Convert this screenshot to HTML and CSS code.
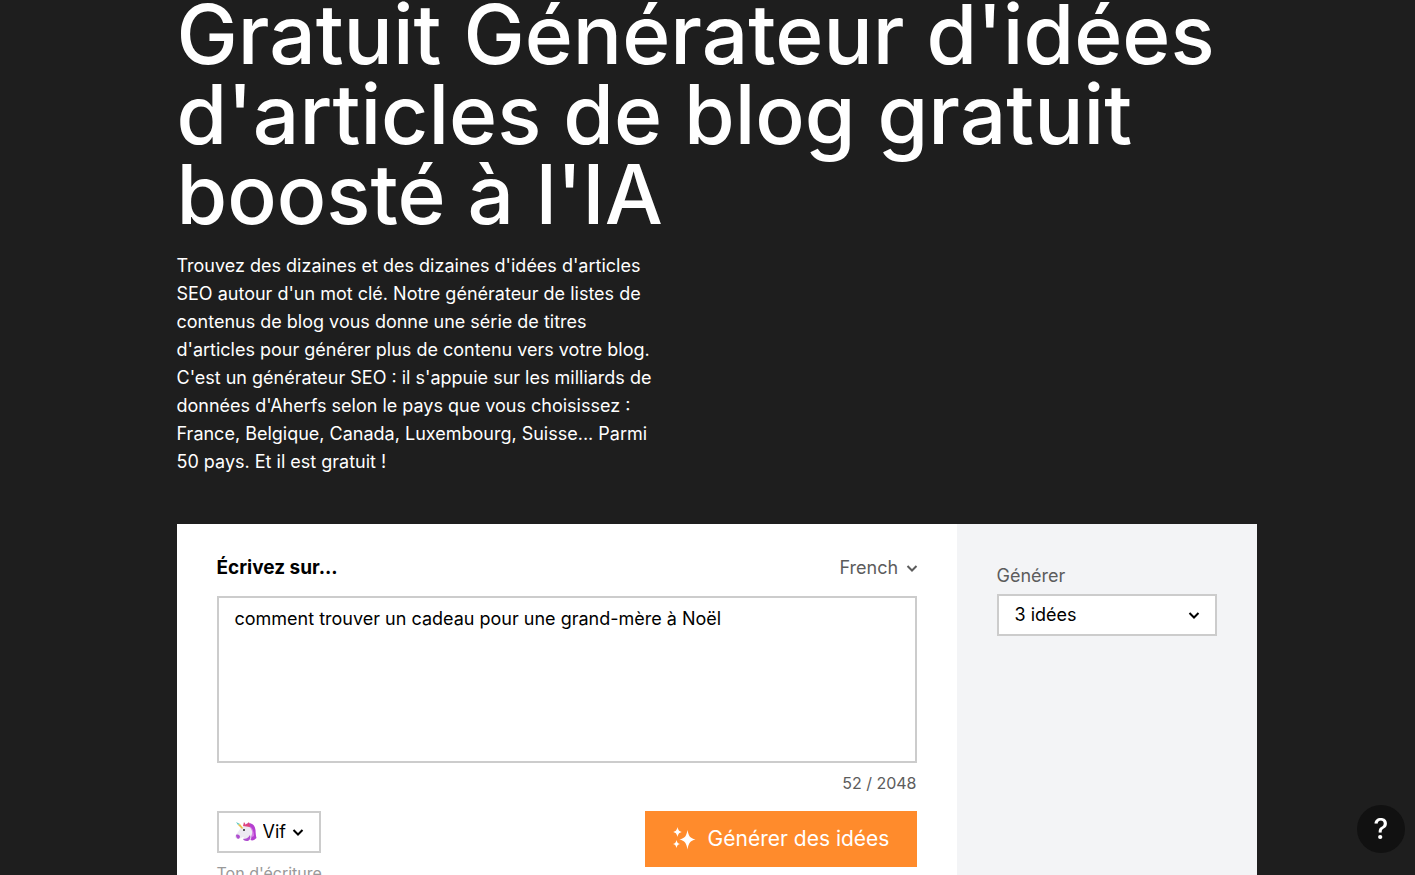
FILE: index.html
```html
<!DOCTYPE html>
<html lang="fr">
<head>
    <meta charset="UTF-8">
    <title>Générateur d'idées d'articles de blog</title>
    <link rel="stylesheet" href="styles.css">
</head>
<body>

<main class="page">
    <h1 class="title">Gratuit Générateur d'idées d'articles de blog gratuit boosté à l'IA</h1>
    <p class="intro">Trouvez des dizaines et des dizaines d'idées d'articles SEO autour d'un mot clé. Notre générateur de listes de contenus de blog vous donne une série de titres d'articles pour générer plus de contenu vers votre blog. C'est un générateur SEO&nbsp;: il s'appuie sur les milliards de données d'Aherfs selon le pays que vous choisissez&nbsp;: France, Belgique, Canada, Luxembourg, Suisse... Parmi 50 pays. Et il est gratuit&nbsp;!</p>

    <form class="tool">
        <div class="tool-main">
            <div class="tool-head">
                <label class="tool-label" for="topic">Écrivez sur...</label>
                <div class="select select-plain">
                    <select aria-label="Langue">
                        <option>French</option>
                    </select>
                    <svg class="chevron" viewBox="0 0 10 7"><path d="M.5 1L5 5.500 9.500 1"/></svg>
                </div>
            </div>
            <textarea class="topic" id="topic" spellcheck="false">comment trouver un cadeau pour une grand-mère à Noël</textarea>
            <div class="counter">52 / 2048</div>
            <div class="tool-foot">
                <div class="tone">
                    <div class="select select-tone">
                        <svg class="unicorn" viewBox="0 0 22 22">
                            <path fill="#b53fd0" d="M11 3c5-2 9 1 9.500 6 .2 4 .5 6 1 8-2 2-4 3-6 2-1-5-2-8-5-12z"/>
                            <path fill="#d77be6" d="M14 5c3 1 5 5 5 10l-2 1c0-5-1-7-3-9z"/>
                            <path fill="#ece9f2" d="M7 6l3-2 3 1c3 2 5 5 4 8l-1 5c-2 2-6 2-8 0l1-2c-2 0-3 1-5 2-2 .5-4-1-4-3 2-3 4-5 6-9z"/>
                            <path fill="#b04fd0" d="M1 14c2-1 4 0 4 2-1 3-4 2-4-2zM8 18c3 0 5-1 7-4 1 3 0 5-2 6-2 0-4 0-5-2z"/>
                            <path fill="#e0457b" d="M8 5l1-4 2 3 3-3 1 5z"/>
                            <path fill="#58c7c0" d="M1 1l4 2-2 1z"/>
                            <path fill="#e8c04a" d="M3 4l2-1 3 4-1 1z"/>
                            <circle cx="9" cy="9" r="1" fill="#222"/>
                        </svg>
                        <select id="tone">
                            <option>Vif</option>
                        </select>
                        <svg class="chevron" viewBox="0 0 10 7"><path d="M.5 1L5 5.500 9.500 1"/></svg>
                    </div>
                    <label class="hint" for="tone">Ton d'écriture</label>
                </div>
                <button class="submit" type="button">
                    <svg class="sparkles" viewBox="0 0 24 24">
                        <path d="M15.500 3c1.300 6.500 2.500 8 8 9.500-5.500 1.500-6.700 3-8 10-1.300-7-2.500-8.500-8-10 5.500-1.500 6.700-3 8-9.500z"/>
                        <path d="M5.500 0c.8 3.300 1.500 4.200 4.500 5-3 .9-3.700 1.700-4.500 5C4.700 6.700 4 5.900 1 5c3-.8 3.700-1.700 4.500-5z"/>
                        <path d="M4.500 13c.6 2.500 1.200 3.300 3.500 4-2.300.7-2.900 1.500-3.500 4-.6-2.500-1.200-3.300-3.500-4 2.300-.7 2.900-1.500 3.500-4z"/>
                    </svg>
                    Générer des idées
                </button>
            </div>
        </div>
        <div class="tool-side">
            <label for="count">Générer</label>
            <div class="select select-count">
                <select id="count">
                    <option>3 idées</option>
                </select>
                <svg class="chevron" viewBox="0 0 10 7"><path d="M.5 1L5 5.500 9.500 1"/></svg>
            </div>
        </div>
    </form>
</main>

<button class="help" type="button" aria-label="Aide">?</button>

</body>
</html>
```
FILE: styles.css
```css
* {
    margin: 0;
    padding: 0;
    box-sizing: border-box;
}

body {
    height: 100vh;
    overflow: hidden;
    padding-left: 18px;
    background: #1e1e1e;
    color: #fff;
    font-family: Inter, "Liberation Sans", sans-serif;
}

select, textarea, button {
    font: inherit;
    color: inherit;
    border: 0;
    border-radius: 0;
    background: none;
    outline: none;
}

.page {
    max-width: 1080px;
    margin: 0 auto;
}

.title {
    margin-top: -5px;
    font-size: 82px;
    line-height: 80px;
    font-weight: 500;
}

.intro {
    max-width: 480px;
    margin: 17px 0 48px;
    font-size: 18px;
    line-height: 28px;
}

.tool {
    display: grid;
    grid-template-columns: 1fr 300px;
    background: #fff;
    color: #000;
    font-size: 18px;
    line-height: 24px;
}

.tool-main {
    padding: 32px 40px 40px;
}

.tool-head {
    display: flex;
    justify-content: space-between;
    align-items: center;
    margin-bottom: 16px;
}

.tool-label {
    font-size: 19px;
    font-weight: 700;
}

.select {
    position: relative;
    display: flex;
    align-items: center;
}

.select select {
    appearance: none;
    width: 100%;
}

.chevron {
    position: absolute;
    right: 0;
    width: 10px;
    height: 7px;
    overflow: visible;
    fill: none;
    stroke: currentColor;
    stroke-width: 2;
    pointer-events: none;
}

.select-plain {
    color: #5c5c5c;
}

.select-plain select {
    padding-right: 18px;
}

.topic {
    display: block;
    width: 100%;
    height: 167px;
    padding: 9px 16px;
    border: 2px solid #ccc;
    resize: none;
}

.counter {
    margin: 8px 0 16px;
    color: #5c5c5c;
    font-size: 16px;
    text-align: right;
}

.tool-foot {
    display: flex;
    justify-content: space-between;
    align-items: flex-start;
}

.select-tone {
    width: 104px;
    height: 42px;
    padding: 0 16px;
    border: 2px solid #ccc;
}

.select-tone select {
    padding-left: 6px;
}

.select-tone .chevron {
    right: 16px;
}

.unicorn {
    flex: none;
    width: 22px;
    height: 22px;
}

.hint {
    display: block;
    margin-top: 8px;
    color: #999;
    font-size: 16px;
}

.submit {
    display: flex;
    align-items: center;
    justify-content: center;
    gap: 12px;
    width: 272px;
    height: 56px;
    background: #ff8b2c;
    color: #fff;
    font-size: 21px;
}

.sparkles {
    width: 24px;
    height: 24px;
    fill: #fff;
}

.tool-side {
    padding: 40px;
    background: #f3f4f6;
}

.tool-side label {
    display: block;
    margin-bottom: 6px;
    color: #5c5c5c;
}

.select-count {
    height: 42px;
    border: 2px solid #ccc;
    background: #fff;
}

.select-count select {
    padding: 0 16px;
}

.select-count .chevron {
    right: 16px;
}

.help {
    position: fixed;
    right: 10px;
    bottom: 22px;
    width: 48px;
    height: 48px;
    border-radius: 50%;
    background: #111;
    font-size: 28px;
    font-weight: 500;
}
```
